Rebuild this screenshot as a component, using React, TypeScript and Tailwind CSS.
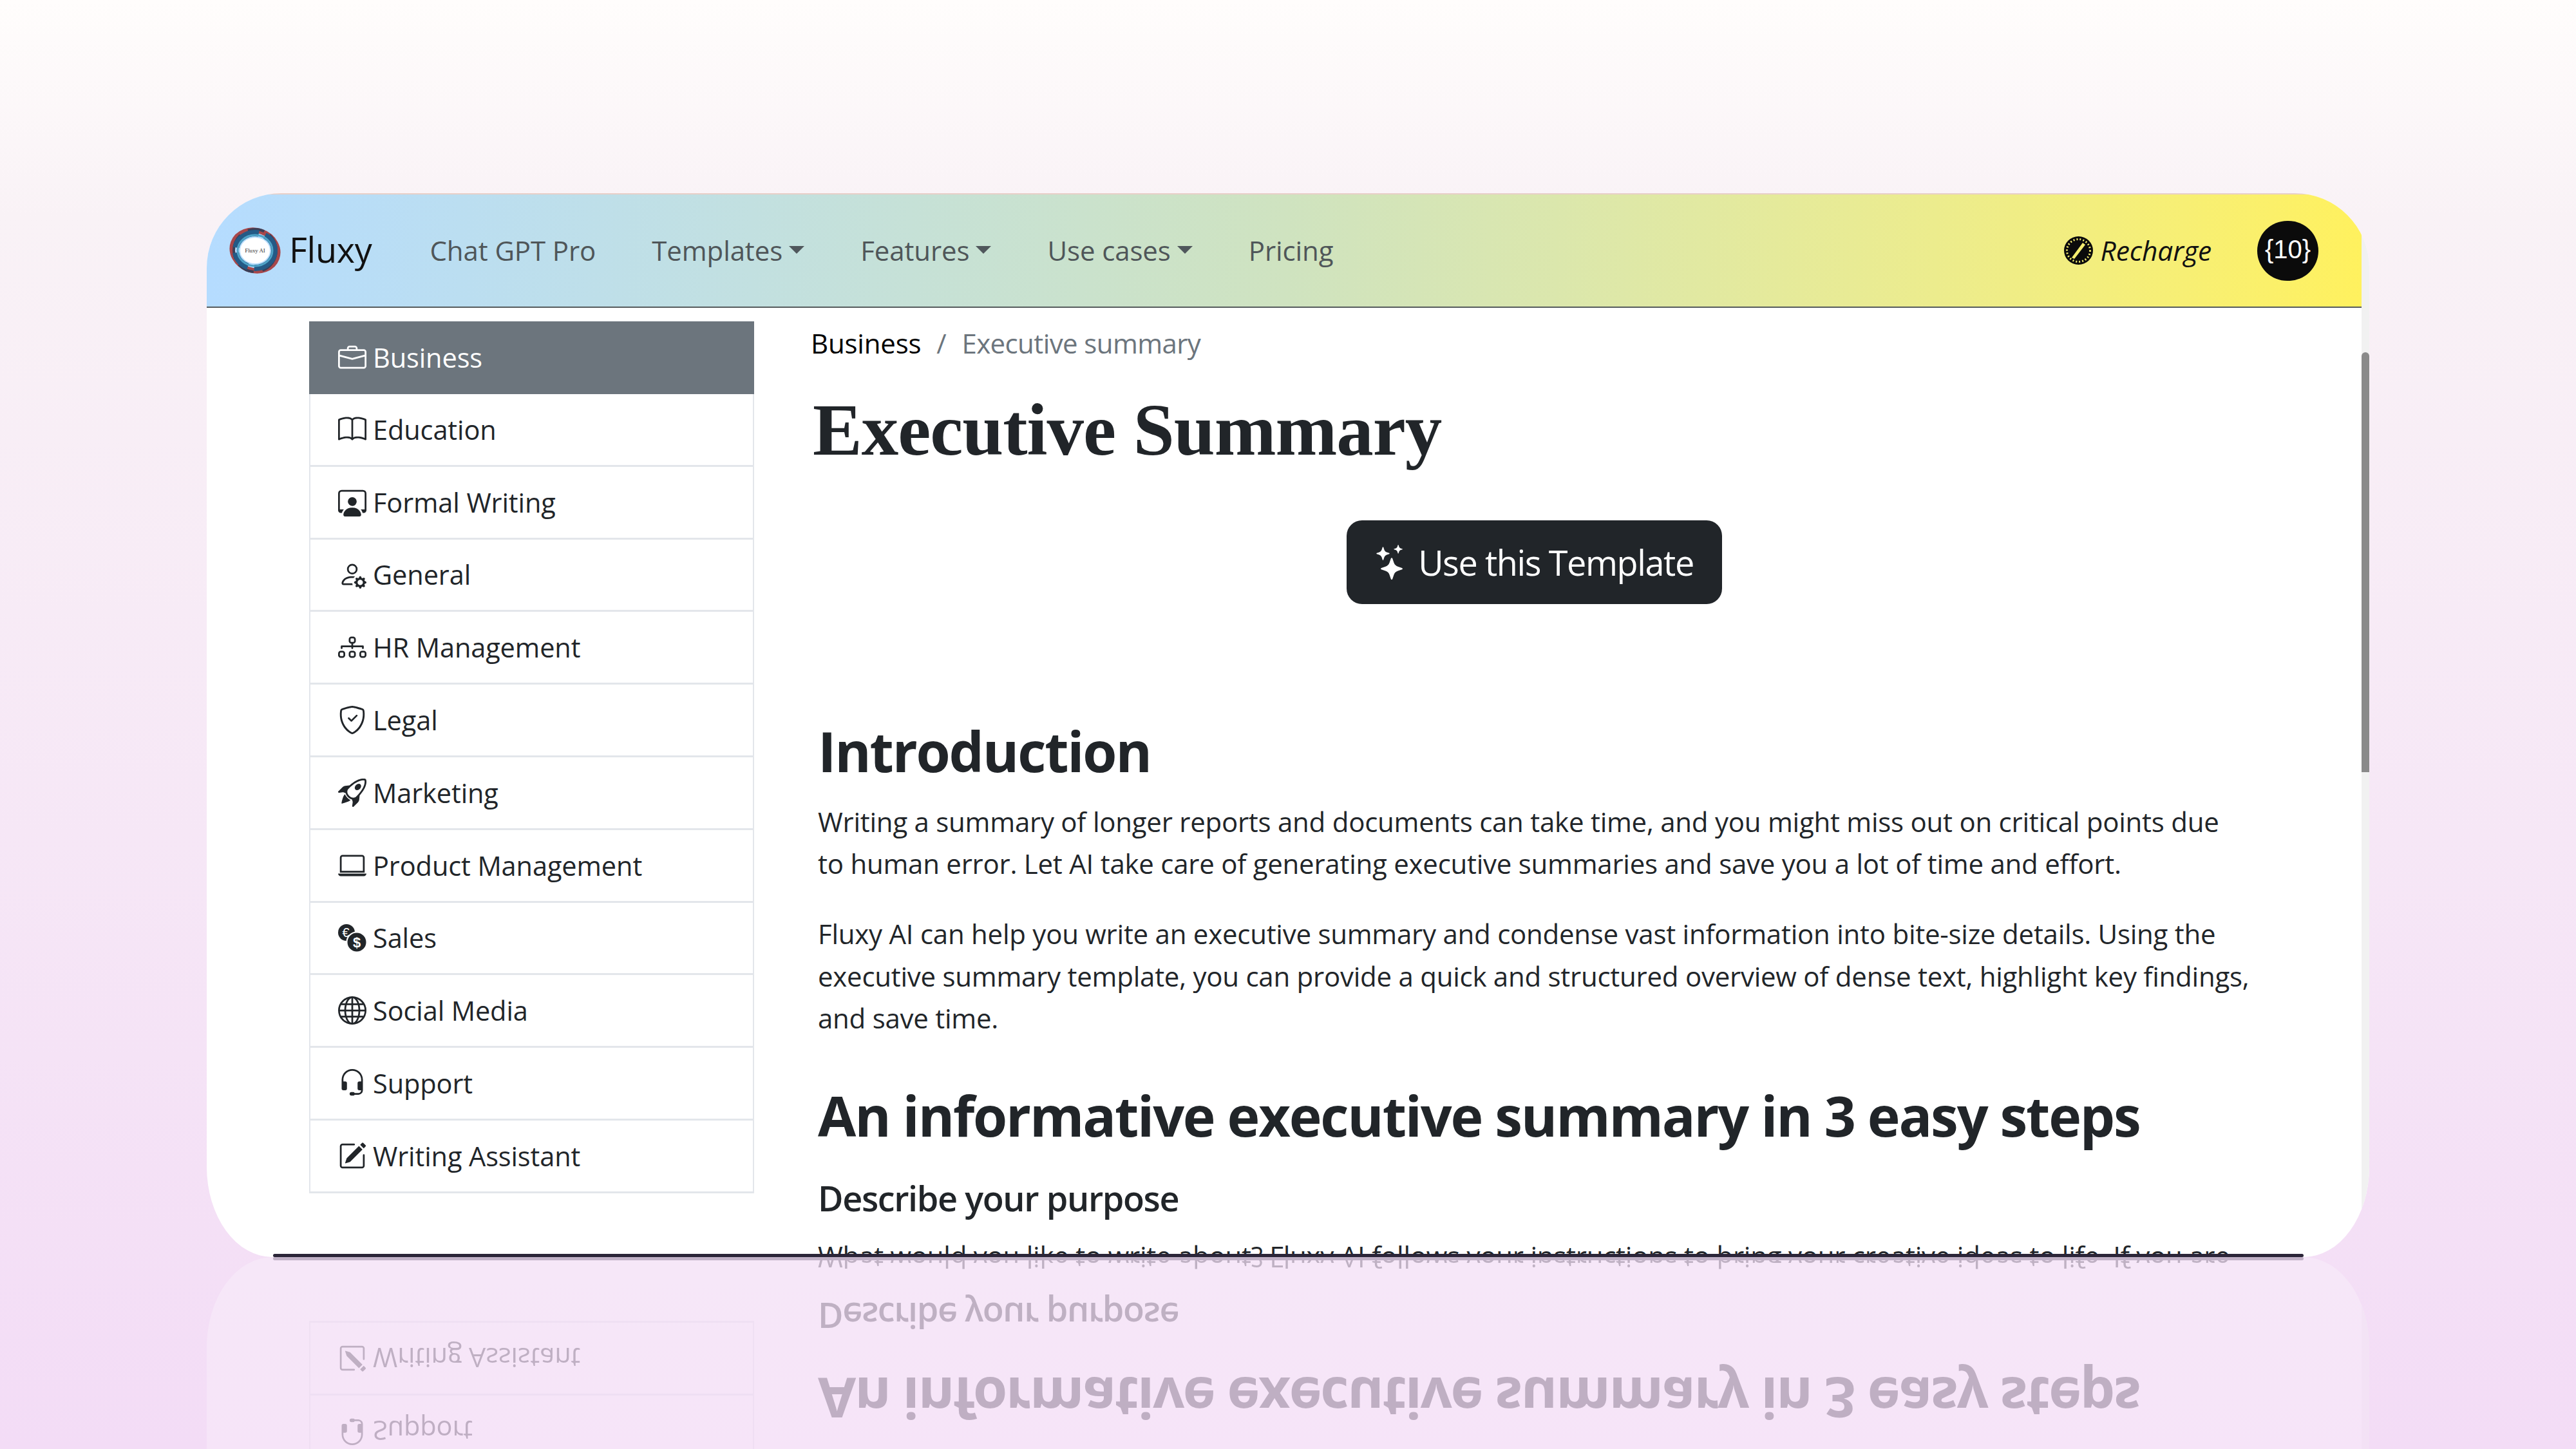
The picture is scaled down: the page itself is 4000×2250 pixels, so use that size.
import React from "react";
import { BsBriefcase, BsBook, BsPersonWorkspace, BsPersonGear, BsDiagram3, BsShieldCheck, BsRocketTakeoff, BsLaptop, BsGlobe, BsHeadset, BsPencilSquare, BsStars } from "react-icons/bs";

function CoinsIcon() {
  return (
    <svg viewBox="0 0 44 44" className="h-[44px] w-[44px]">
      <circle cx="13" cy="14" r="13" fill="#212529" />
      <text x="12" y="21" fontSize="20" fill="#fff" textAnchor="middle" fontFamily="Liberation Sans">€</text>
      <circle cx="29" cy="29" r="15.5" fill="#212529" stroke="#fff" strokeWidth="2" />
      <text x="29" y="37" fontSize="22" fontWeight="700" fill="#fff" textAnchor="middle" fontFamily="Liberation Sans">$</text>
    </svg>
  );
}

function Logo() {
  return (
    <svg viewBox="0 0 82 74" className="h-[74px] w-[82px]">
      <ellipse cx="41" cy="37" rx="36" ry="31" fill="none" stroke="#a8474a" strokeWidth="8" transform="rotate(20 41 37)" />
      <ellipse cx="41" cy="37" rx="33" ry="33" fill="none" stroke="#3a3f57" strokeWidth="4" strokeDasharray="40 14 26 10" />
      <ellipse cx="41" cy="37" rx="30" ry="27" fill="none" stroke="#245a86" strokeWidth="10" strokeDasharray="46 10 30 8" />
      <ellipse cx="41" cy="37" rx="27" ry="24" fill="none" stroke="#4fa3c7" strokeWidth="3" />
      <ellipse cx="41" cy="37" rx="23" ry="20" fill="#fff" />
      <text x="41" y="40" fontSize="9" fill="#333" textAnchor="middle" fontFamily="Liberation Serif">Fluxy AI</text>
    </svg>
  );
}

function RechargeIcon() {
  return (
    <svg viewBox="0 0 45 44" className="h-[44px] w-[45px]">
      <ellipse cx="22.5" cy="22" rx="22.5" ry="22" fill="#0b0b0b" />
      <ellipse cx="22.5" cy="22" rx="18" ry="17.5" fill="none" stroke="#f5ee70" strokeWidth="3" strokeDasharray="2 3" />
      <path d="M12 33 L29 10 L33 13 L16 35 Z" fill="#f5ee70" />
    </svg>
  );
}

const items: [string, React.ReactNode][] = [
  ["Business", <BsBriefcase size={44} />],
  ["Education", <BsBook size={44} />],
  ["Formal Writing", <BsPersonWorkspace size={44} />],
  ["General", <BsPersonGear size={44} />],
  ["HR Management", <BsDiagram3 size={44} />],
  ["Legal", <BsShieldCheck size={44} />],
  ["Marketing", <BsRocketTakeoff size={44} />],
  ["Product Management", <BsLaptop size={44} />],
  ["Sales", <CoinsIcon />],
  ["Social Media", <BsGlobe size={44} />],
  ["Support", <BsHeadset size={44} />],
  ["Writing Assistant", <BsPencilSquare size={44} />],
];

function Caret() {
  return <span className="ml-[10px] inline-block h-0 w-0 border-x-[12px] border-t-[12px] border-x-transparent border-t-[#50575c] align-middle" />;
}

function NavItem({ label, caret }: { label: string; caret?: boolean }) {
  return (
    <span className="flex items-center whitespace-nowrap text-[#4f5659]">
      {label}
      {caret && <Caret />}
    </span>
  );
}

function Header() {
  return (
    <header className="flex h-[178px] items-center border-t-2 border-b-2 border-t-[#e8cfc8] border-b-[#555b5c] bg-gradient-to-r from-[#b5dcff] via-[#cfe3c0] to-[#fff15e] pl-[34px] pr-[67px] font-['Open_Sans',sans-serif] text-[42px] tracking-[-0.1px]">
      <Logo />
      <span className="ml-[12px] pb-[4px] text-[54px] tracking-[-0.3px] text-[#111]">Fluxy</span>
      <nav className="ml-[90px] flex gap-[87px] pb-[2px]">
        <NavItem label="Chat GPT Pro" />
        <NavItem label="Templates" caret />
        <NavItem label="Features" caret />
        <NavItem label="Use cases" caret />
        <NavItem label="Pricing" />
      </nav>
      <div className="ml-auto flex items-center">
        <RechargeIcon />
        <span className="ml-[12px] text-[42.5px] italic text-[#111]">Recharge</span>
        <span className="ml-[71px] flex h-[93px] w-[95px] items-center justify-center rounded-full bg-[#0b0b0b] pb-[4px] font-['Liberation_Sans',sans-serif] text-[40px] tracking-normal text-white">{"{10}"}</span>
      </div>
    </header>
  );
}

function Sidebar() {
  return (
    <aside className="ml-[159px] mt-[21px] h-[1352px] w-[691px] shrink-0 font-['Open_Sans',sans-serif] text-[41.5px] font-medium tracking-[-0.1px]">
      {items.map(([label, icon], i) => (
        <div
          key={label}
          className={
            i === 0
              ? "flex h-[113px] items-center gap-[10px] bg-[#6c757d] pl-[45px] text-white"
              : "flex h-[112.8px] items-center gap-[10px] border-x-[2px] border-b-[3px] border-[#e3e6eb] pl-[43px] text-[#212529]"
          }
        >
          <span className="flex h-[44px] w-[44px] items-center justify-center">{icon}</span>
          <span className="whitespace-nowrap">{label}</span>
        </div>
      ))}
    </aside>
  );
}

function Main() {
  return (
    <main className="ml-[88px] w-[2246px] shrink-0 text-[#212529]">
      <div className="mt-[22px] flex h-[65px] items-center whitespace-nowrap font-['Open_Sans',sans-serif] text-[42px] tracking-[-0.2px]">
        <span className="font-medium text-black">Business</span>
        <span className="ml-[24px] text-[#6c757d]">/</span>
        <span className="ml-[24px] tracking-[-0.6px] text-[#6c757d]">Executive summary</span>
      </div>
      <h1 className="ml-[3px] mt-[34px] whitespace-nowrap font-['Liberation_Serif',serif] text-[115px] font-bold leading-[138px] tracking-[-1px]">Executive Summary</h1>
      <div className="mt-[71px] flex justify-center">
        <button className="flex h-[130px] w-[583px] items-center justify-center gap-[14px] rounded-[24px] bg-[#212529] font-['Open_Sans',sans-serif] text-[54px] tracking-[-1.4px] text-white">
          <BsStars size={54} />
          Use this Template
        </button>
      </div>
      <article className="ml-[11px] whitespace-nowrap font-['Open_Sans',sans-serif]">
        <h2 className="mt-[178px] text-[86px] font-bold leading-[100px] tracking-[-2.2px]">Introduction</h2>
        <p className="mt-[27px] text-[42px] leading-[65px] tracking-[-0.25px]">
          Writing a summary of longer reports and documents can take time, and you might miss out on critical points due
          <br />
          to human error. Let AI take care of generating executive summaries and save you a lot of time and effort.
        </p>
        <p className="mt-[44px] text-[42px] leading-[65.5px] tracking-[-0.25px]">
          Fluxy AI can help you write an executive summary and condense vast information into bite-size details. Using the
          <br />
          executive summary template, you can provide a quick and structured overview of dense text, highlight key findings,
          <br />
          and save time.
        </p>
        <h2 className="mt-[68px] text-[86px] font-bold leading-[100px] tracking-[-2.2px]">An informative executive summary in 3 easy steps</h2>
        <h3 className="mt-[43px] text-[54px] font-semibold leading-[70px] tracking-[-1.4px]">Describe your purpose</h3>
        <p className="mt-[22px] text-[42px] leading-[65px] tracking-[-0.25px]">
          What would you like to write about? Fluxy AI follows your instructions to bring your creative ideas to life. If you are
        </p>
      </article>
    </main>
  );
}

function Window({ className }: { className?: string }) {
  return (
    <section className={"relative flex h-[1652px] w-[3358px] shrink-0 overflow-hidden rounded-[116px_116px_102px_102px/116px_116px_140px_140px] bg-white " + (className ?? "")}>
      <div className="w-[3346px] shrink-0">
        <Header />
        <div className="flex">
          <Sidebar />
          <Main />
        </div>
      </div>
      <div className="w-[12px] shrink-0 bg-[#f1f1f1] pt-[247px]">
        <div className="h-[652px] w-full rounded-t-[6px] bg-[#8a8a8a]" />
      </div>
      <div className="absolute bottom-0 left-[103px] right-[102px] h-[5px] rounded-full bg-[#2b2538]" />
    </section>
  );
}

export default function App() {
  return (
    <div className="flex h-[2250px] w-[4000px] flex-col overflow-hidden bg-gradient-to-b from-[#fffdfc] via-[#f9f2f6] via-15% to-[#f3dcf6] pl-[321px] pt-[300px]">
      <Window />
      <Window className="-scale-y-100 opacity-25" />
    </div>
  );
}
